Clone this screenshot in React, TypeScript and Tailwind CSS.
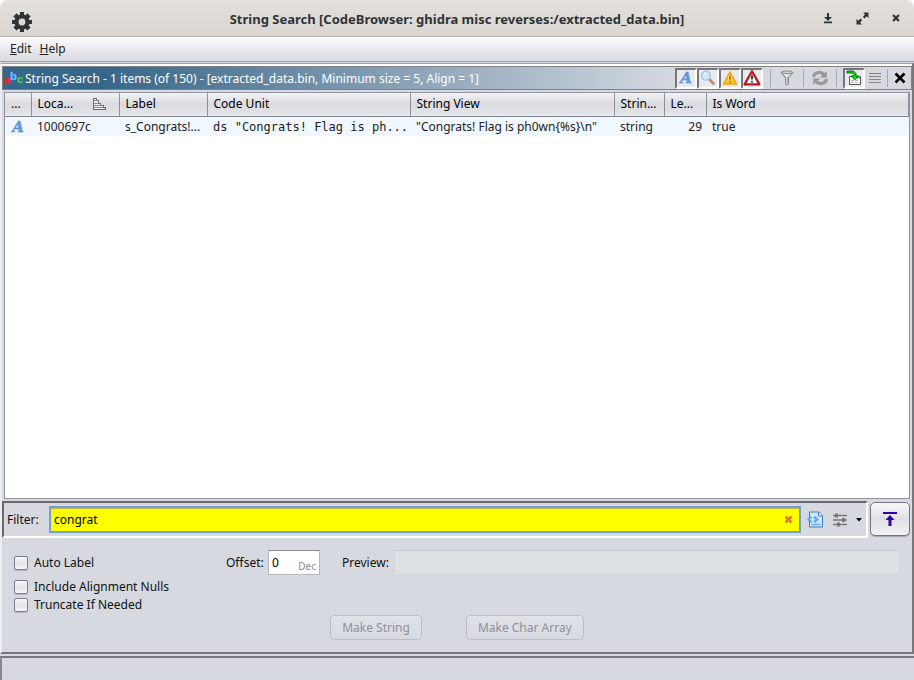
import type { ReactNode } from "react";

const columns = [
  { name: "...", width: "w-[26px]" },
  { name: "Loca...", width: "w-[88px]", sorted: true },
  { name: "Label", width: "w-[88px]" },
  { name: "Code Unit", width: "w-[203px]" },
  { name: "String View", width: "w-[204px]" },
  { name: "Strin...", width: "w-[50px]" },
  { name: "Le...", width: "w-[42px]" },
  { name: "Is Word", width: "" },
];

function LetterA() {
  return (
    <svg
      width="14"
      height="14"
      viewBox="0 0 14 14"
      className="shrink-0 font-['DejaVu_Serif','Liberation_Serif',serif] text-[15px] font-bold italic"
    >
      <text x="7" y="12" textAnchor="middle" fill="#6498e2" stroke="#5088d6" strokeWidth="0.400">A</text>
    </svg>
  );
}

function SearchGlass() {
  return (
    <svg width="16" height="16" viewBox="0 0 16 16">
      <path d="m9.5 9.5 4 4" stroke="#c98b55" strokeWidth="2.600" strokeLinecap="round" />
      <path d="m9 9 1.500 1.400" stroke="#8796a8" strokeWidth="1.600" />
      <circle cx="6" cy="5.700" r="4.400" fill="#cfe6fb" stroke="#a3c4ea" strokeWidth="1.400" />
      <path d="M3.500 5.200A2.600 2.600 0 0 1 6 3" fill="none" stroke="#fff" strokeWidth="1.200" />
    </svg>
  );
}

function YellowWarning() {
  return (
    <svg width="16" height="16" viewBox="0 0 16 16">
      <path d="M8 1.800 14.600 14H1.400z" fill="#ffc41c" stroke="#f5a010" strokeWidth="1.400" strokeLinejoin="round" />
      <path d="M8 5.500v4.300M8 11v1.800" stroke="#fff3c4" strokeWidth="3" />
      <path d="M8 5.500v4.300M8 11v1.800" stroke="#7a5010" strokeWidth="1.400" />
    </svg>
  );
}

function RedWarning() {
  return (
    <svg width="18" height="18" viewBox="0 0 18 18">
      <path d="M9 2.200 16.400 15.400H1.600z" fill="#fff" stroke="#b8141c" strokeWidth="2.200" strokeLinejoin="round" />
      <path d="M9 6.200v4.200M9 11.800v1.800" stroke="#222" strokeWidth="1.700" />
    </svg>
  );
}

function Funnel() {
  return (
    <svg width="16" height="16" viewBox="0 0 16 16">
      <path d="M2.300 2.500 6.600 8v6.200q1.400 1.200 2.800 0V8l4.300-5.500z" fill="#e4e4e4" stroke="#8d8d8d" strokeWidth="1.100" />
      <ellipse cx="8" cy="2.300" rx="5.700" ry="1.300" fill="#d2d2d2" stroke="#8d8d8d" />
      <path d="M8.500 7v6.500" stroke="#a8a8a8" />
    </svg>
  );
}

function Refresh() {
  return (
    <svg width="18" height="18" viewBox="0 0 18 18">
      <path d="M2.500 8C3 3.500 9 2 12.500 5.200" fill="none" stroke="#999" strokeWidth="3.200" />
      <path d="M15.800 2v6.600H8.800z" fill="#999" />
      <path d="M15.500 10c-.500 4.500-6.500 6-10 2.800" fill="none" stroke="#999" strokeWidth="3.200" />
      <path d="M2.200 16V9.400h7z" fill="#999" />
    </svg>
  );
}

function TableArrow() {
  return (
    <svg width="16" height="16" viewBox="0 0 16 16">
      <path d="M3.500 6.500h11v8h-11z" fill="#fff" stroke="#555" />
      <path d="M9 7.500h5" stroke="#5a9be8" strokeWidth="2" />
      <path d="M5 10.500h8M5 12.500h8" stroke="#b8b8b8" strokeDasharray="3 1" />
      <path d="M1 1h6.500L10 3.500V6h2.500L9 9.800 5.300 6H8V4.500L6.500 3H1z" fill="#00f000" stroke="#053c05" strokeWidth="0.800" />
    </svg>
  );
}

function Lines() {
  return (
    <svg width="12" height="12" viewBox="0 0 12 12" shapeRendering="crispEdges">
      <path d="M0 1.500h12M0 4.500h12M0 7.500h12M0 10.500h12" stroke="#858585" />
    </svg>
  );
}

function AbcIcon() {
  return (
    <svg
      width="19"
      height="20"
      viewBox="0 0 19 20"
      className="shrink-0 font-['Liberation_Sans',Arial,sans-serif] text-[11px] font-bold"
    >
      <text x="0" y="16" fill="#ff2a35" stroke="#f01c28" strokeWidth="0.600">a</text>
      <text x="6" y="12" fill="#9accfb" stroke="#5a9df0" strokeWidth="0.600">b</text>
      <text x="13" y="15" fill="#6ad877" stroke="#3fae50" strokeWidth="0.600">c</text>
    </svg>
  );
}

function ToggleButton({ label, children }: { label: string; children: ReactNode }) {
  return (
    <button
      aria-label={label}
      aria-pressed="true"
      className="flex h-[21px] w-[22px] items-center justify-center border-2 border-t-[#77777b] border-l-[#77777b] border-r-white border-b-white bg-[#e8eaee]"
    >
      {children}
    </button>
  );
}

function PlainButton({ label, children }: { label: string; children: ReactNode }) {
  return (
    <button aria-label={label} className="flex h-5 w-5 items-center justify-center">
      {children}
    </button>
  );
}

function Divider() {
  return <div className="h-[18px] w-px bg-[#a5a8af]" />;
}

function CheckOption({ label }: { label: string }) {
  return (
    <label className="flex h-[18px] items-center gap-[6px]">
      <input
        type="checkbox"
        className="size-[14px] appearance-none rounded-[2px] border border-[#7c7f88] bg-linear-to-b from-[#f8f8fa] via-[#e2e4e9] to-[#f4f5f8] shadow-[0_1px_0_#b4b7bf]"
      />
      {label}
    </label>
  );
}

function TitleBar() {
  return (
    <div className="bg-white">
      <header className="grid h-[37px] grid-cols-[1fr_auto_1fr] items-center rounded-t-lg border-b border-[#bfb5aa] bg-linear-to-b from-[#e3e0dd] to-[#dad7d2] px-[10px] text-[#2e3436]">
        <svg width="20" height="20" viewBox="0 0 20 20" className="mt-[7px] ml-[2px]">
          <path
            fill="#2e3436"
            fillRule="evenodd"
            d="M8 0h4v2.600l1.500.6 1.900-1.900 3.200 3.200-1.900 1.900.6 1.600H20v4h-2.700l-.6 1.500 1.900 1.900-3.200 3.200-1.900-1.900-1.500.6V20H8v-2.700l-1.500-.6-1.900 1.900-3.200-3.200 1.900-1.900L2.700 12H0V8h2.700l.6-1.600-1.900-1.900 3.200-3.200 1.900 1.900L8 2.600zM10 6.600a3.400 3.400 0 1 0 0 6.800 3.400 3.400 0 0 0 0-6.800z"
          />
        </svg>
        <h1 className="pt-[2px] text-[13px] font-bold whitespace-nowrap">
          String Search [CodeBrowser: ghidra misc reverses:/extracted_data.bin]
        </h1>
        <div className="flex justify-end gap-[18px]">
          <button aria-label="Minimize" className="flex size-4 items-center justify-center">
            <svg width="10" height="12" viewBox="0 0 10 12" fill="#2e3436">
              <path d="M4 1h2v4h3L5 9 1 5h3zM1 9.500h8v1.800H1z" />
            </svg>
          </button>
          <button aria-label="Maximize" className="flex size-4 items-center justify-center">
            <svg width="13" height="13" viewBox="0 0 13 13" fill="#2e3436">
              <path d="M7 .5h5.500V6l-1.800-1.800-2.200 2.200-1.600-1.600L9 2.500zM.5 7l1.800 1.800 2.200-2.200 1.600 1.600L4 10.500l2 2H.5z" />
            </svg>
          </button>
          <button aria-label="Close" className="flex size-4 items-center justify-center">
            <svg width="8" height="8" viewBox="0 0 8 8">
              <path d="m1 1 6 6M7 1 1 7" stroke="#2e3436" strokeWidth="2.200" />
            </svg>
          </button>
        </div>
      </header>
    </div>
  );
}

function PanelHeader() {
  return (
    <div className="flex h-6 items-center border border-[#818184] bg-[#d6d9e0]">
      <div className="flex h-full min-w-0 flex-1 items-center gap-[2px] bg-linear-to-r from-[#35678a] from-15% to-[#d6d9e0] pl-px text-white">
        <AbcIcon />
        <h2 className="truncate pt-px">
          String Search - 1 items (of 150) - [extracted_data.bin, Minimum size = 5, Align = 1]
        </h2>
      </div>
      <div className="flex h-full items-center pr-px">
        <ToggleButton label="Show defined strings"><LetterA /></ToggleButton>
        <ToggleButton label="Show undefined strings"><SearchGlass /></ToggleButton>
        <ToggleButton label="Show partial strings"><YellowWarning /></ToggleButton>
        <ToggleButton label="Show conflicting strings"><RedWarning /></ToggleButton>
        <div className="ml-[7px] flex items-center gap-[6px]">
          <Divider />
          <PlainButton label="Filter words"><Funnel /></PlainButton>
          <Divider />
          <PlainButton label="Refresh"><Refresh /></PlainButton>
          <Divider />
          <ToggleButton label="Selection navigation"><TableArrow /></ToggleButton>
        </div>
        <div className="flex items-center gap-[2px]">
          <PlainButton label="Make selection"><Lines /></PlainButton>
          <Divider />
          <PlainButton label="Close panel">
            <svg width="12" height="12" viewBox="0 0 12 12">
              <path d="m1.500 1.500 9 9M10.500 1.500l-9 9" stroke="#000" strokeWidth="2.600" />
            </svg>
          </PlainButton>
        </div>
      </div>
    </div>
  );
}

function ResultsTable() {
  return (
    <div className="mx-[2px] mt-[2px] flex-1 border border-[#9295a0] bg-white">
      <table className="w-full table-fixed border-collapse text-left">
        <thead>
          <tr className="h-[23px] border-b border-[#7e828c] bg-linear-to-b from-[#f3f3f5] via-[#d9dbe0] to-[#e2e4e8] text-black">
            {columns.map((c) => (
              <th key={c.name} className={`${c.width} border-r border-[#8d9099] p-0 pl-[6px] font-normal`}>
                <div className="flex items-center justify-between pr-[13px]">
                  <span className="whitespace-nowrap">{c.name}</span>
                  {c.sorted && (
                    <svg width="13" height="12" viewBox="0 0 13 12" shapeRendering="crispEdges">
                      <path d="M.5.500h3v2h2v3h2v2h3v2h2v2H.5z" fill="#f0f0f0" stroke="#6d6d6d" />
                      <path d="M1 2.500h3M1 5.500h5M1 7.500h7M1 9.500h9" stroke="#8a8a8a" />
                    </svg>
                  )}
                </div>
              </th>
            ))}
          </tr>
        </thead>
        <tbody>
          <tr className="h-5 bg-[#f0f7ff] whitespace-nowrap text-[#222] [&>td]:p-0 [&>td]:pt-px [&>td]:pl-[6px]">
            <td><LetterA /></td>
            <td>1000697c</td>
            <td>s_Congrats!...</td>
            <td className="font-['DejaVu_Sans_Mono','Liberation_Mono',monospace]">ds "Congrats! Flag is ph...</td>
            <td>"Congrats! Flag is ph0wn{"{%s}"}\n"</td>
            <td>string</td>
            <td><div className="pr-1 text-right">29</div></td>
            <td>true</td>
          </tr>
        </tbody>
      </table>
    </div>
  );
}

function FilterRow() {
  return (
    <div className="mt-[2px] mr-[2px] flex gap-[2px]">
      <div className="flex h-[37px] min-w-0 flex-1 items-center border-2 border-t-[#69696d] border-l-[#69696d] border-r-white border-b-white pl-[3px]">
        <label htmlFor="filter" className="w-[42px]">Filter:</label>
        <div className="relative min-w-0 flex-1">
          <input
            id="filter"
            defaultValue="congrat"
            className="block h-[27px] w-full border-2 border-[#73a0cc] bg-[#ffff00] px-[3px] text-black inset-shadow-[0_1px_1px_#b4b45a] outline-none"
          />
          <button aria-label="Clear filter" className="absolute top-[9px] right-2">
            <svg width="9" height="9" viewBox="0 0 9 9" className="block">
              <path d="m1.500 1.500 6 6M7.500 1.500l-6 6" stroke="#d9801c" strokeWidth="2.600" />
            </svg>
          </button>
        </div>
        <div className="flex items-center gap-2 pr-1 pl-[6px]">
          <button aria-label="Filter options">
            <svg width="17" height="17" viewBox="0 0 17 17" className="block">
              <path d="M2.500 1h9.500L15.500 4.500v11.500h-13z" fill="#cfe5fa" stroke="#3b7fc4" />
              <path d="M11.500 1v4h4" fill="#fff" stroke="#3b7fc4" />
              <path d="M4.500 13.500h9" stroke="#6fb0ee" strokeWidth="1.600" />
              <path d="M4.500 5.800 1.500 8.500l3 2.700M7 5.800l3.200 2.700L7 11.200" fill="none" stroke="#5aa5e8" strokeWidth="2.200" />
            </svg>
          </button>
          <button aria-label="Column filters">
            <svg width="16" height="16" viewBox="0 0 16 16" className="block">
              <path d="M1 3.500h14M1 8h14M1 12.500h14" stroke="#777" strokeWidth="1.500" />
              <path d="M4.500 1.500v4M11.500 6v4M6.500 10.500v4" stroke="#777" strokeWidth="3" />
            </svg>
          </button>
          <button aria-label="Filter menu">
            <svg width="6" height="4" viewBox="0 0 6 4" className="block"><path d="M0 0h6L3 3.500z" /></svg>
          </button>
        </div>
      </div>
      <button
        aria-label="Collapse options"
        className="mt-px flex h-[34px] w-10 items-center justify-center rounded-[5px] border border-[#74777f] bg-linear-to-b from-[#fafafc] via-[#dddfe4] to-[#f1f2f5] shadow-[0_1px_0_#a5a8b0]"
      >
        <svg width="14" height="14" viewBox="0 0 14 14" fill="#3300a8">
          <path d="M0 0h14v2H0zM7 3l4.500 5H8.500v6h-3V8h-3z" />
        </svg>
      </button>
    </div>
  );
}

function Options() {
  const action =
    "h-[25px] rounded-[4px] border border-[#babdc5] bg-linear-to-b from-[#dfe2e7] to-[#d7dae1] px-[11px] text-[#8e9199]";
  return (
    <div className="px-3 pt-3 pb-3">
      <div className="flex h-[25px] items-center">
        <div className="w-[212px]"><CheckOption label="Auto Label" /></div>
        <label htmlFor="offset" className="w-[42px]">Offset:</label>
        <div className="relative">
          <input
            id="offset"
            defaultValue="0"
            className="block h-[25px] w-[52px] border border-[#b5b8bf] border-t-[#8b8e96] bg-white pl-[3px] text-black outline-none"
          />
          <span className="pointer-events-none absolute right-1 bottom-[2px] text-[10px] leading-[14px] text-[#8e8e8e]">Dec</span>
        </div>
        <label htmlFor="preview" className="ml-[22px] w-[52px]">Preview:</label>
        <input
          id="preview"
          disabled
          className="h-[25px] min-w-0 flex-1 border border-[#d3d6dc] border-t-[#c6c9cf] bg-[#dde0e5]"
        />
      </div>
      <div className="mt-[3px]">
        <CheckOption label="Include Alignment Nulls" />
        <CheckOption label="Truncate If Needed" />
      </div>
      <div className="mt-px flex justify-center gap-11">
        <button disabled className={action}>Make String</button>
        <button disabled className={action}>Make Char Array</button>
      </div>
    </div>
  );
}

export default function App() {
  return (
    <div className="flex min-h-screen flex-col bg-[#d6d9e0] font-['Noto_Sans','Open_Sans',sans-serif] text-[12px] leading-[16px] text-[#111]">
      <TitleBar />
      <nav className="flex h-[25px] items-center gap-2 border-b border-[#9a9faa] bg-linear-to-b from-[#fbfbfc] to-[#d8dbe1] px-[10px] text-[#222]">
        <button><u>E</u>dit</button>
        <button><u>H</u>elp</button>
      </nav>
      <main className="mt-px flex flex-1 flex-col border-t border-r-2 border-b-2 border-l-2 border-t-[#9a9faa] border-r-[#77777b] border-b-[#77777b] border-l-[#eceef2]">
        <div className="h-[2px] bg-white" />
        <PanelHeader />
        <ResultsTable />
        <FilterRow />
        <Options />
      </main>
      <footer className="mt-[2px] h-6 border-t-2 border-l-2 border-t-[#77777b] border-l-[#8a8a8e] bg-[#d6d9e0]" />
    </div>
  );
}
